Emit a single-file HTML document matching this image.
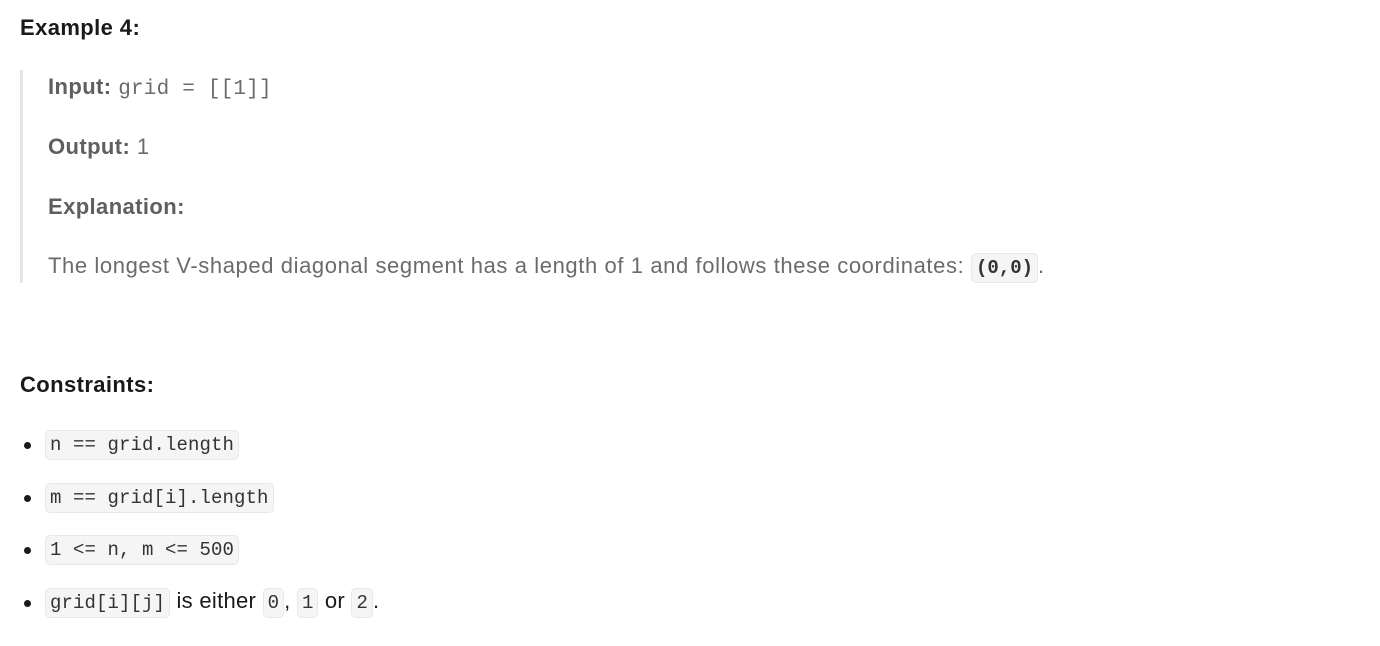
<!DOCTYPE html>
<html><head><meta charset="utf-8"><style>
body{margin:0;width:1380px;height:646px;background:#fff;font-family:"Liberation Sans",sans-serif;color:#262626;position:relative;overflow:hidden}
.a{position:absolute;white-space:nowrap}
h{font-weight:bold;font-size:22px;letter-spacing:0.4px;color:#1a1a1a}
.g{color:#6b6b6b;font-size:22px;letter-spacing:0.6px}
.g b{color:#5f5f5f;letter-spacing:0.4px}
.m{font-family:"Liberation Mono",monospace;font-size:21px;letter-spacing:0.2px}
code{font-family:"Liberation Mono",monospace;font-size:19px;letter-spacing:0.1px;background:#f5f5f5;border:1px solid #e8e8e8;border-radius:5px;padding:3px 4px;color:#333}
.bar{position:absolute;left:20px;top:70px;width:3px;height:213px;background:#e5e5e5}
.li{font-size:22px;color:#1a1a1a;letter-spacing:0.3px}
.dot{position:absolute;left:24px;width:7px;height:7px;border-radius:50%;background:#1a1a1a}
</style></head><body>
<div class="a" style="left:20px;top:15px"><h>Example 4:</h></div>
<div class="bar"></div>
<div class="a g" style="left:48px;top:74px"><b>Input:</b> <span class="m">grid = [[1]]</span></div>
<div class="a g" style="left:48px;top:134px"><b>Output:</b> 1</div>
<div class="a g" style="left:48px;top:194px"><b>Explanation:</b></div>
<div class="a g" style="left:48px;top:253px">The longest V-shaped diagonal segment has a length of 1 and follows these coordinates: <code style="color:#333;font-weight:bold;letter-spacing:0">(0,0)</code>.</div>
<div class="a" style="left:20px;top:372px"><h>Constraints:</h></div>
<div class="dot" style="top:442px"></div>
<div class="a li" style="left:45px;top:430px"><code>n == grid.length</code></div>
<div class="dot" style="top:495px"></div>
<div class="a li" style="left:45px;top:483px"><code>m == grid[i].length</code></div>
<div class="dot" style="top:547px"></div>
<div class="a li" style="left:45px;top:535px"><code>1 &lt;= n, m &lt;= 500</code></div>
<div class="dot" style="top:600px"></div>
<div class="a li" style="left:45px;top:588px"><code>grid[i][j]</code> is either <code>0</code>, <code>1</code> or <code>2</code>.</div>
</body></html>
